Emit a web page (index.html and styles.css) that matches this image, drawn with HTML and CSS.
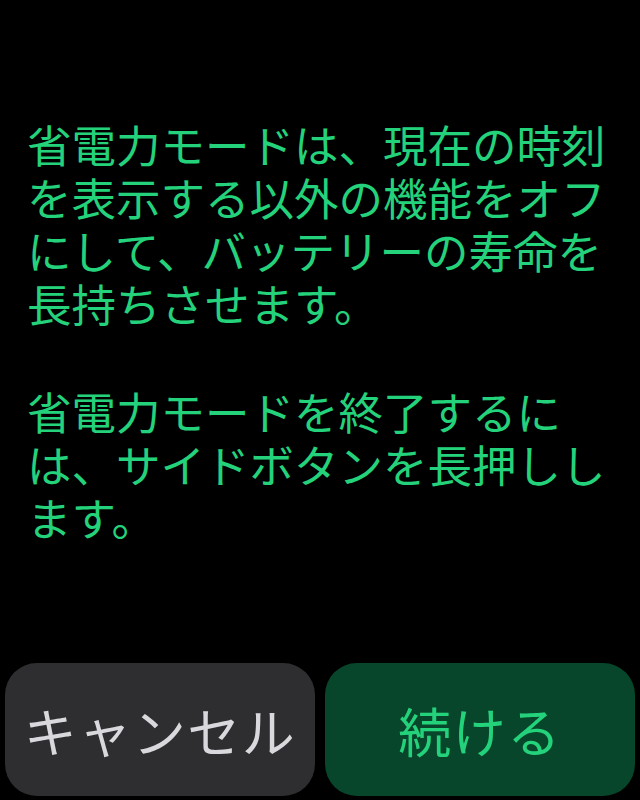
FILE: index.html
```html
<!DOCTYPE html>
<html lang="ja">
<head>
<meta charset="utf-8">
<title>省電力モード</title>
<link rel="stylesheet" href="styles.css">
</head>
<body>
<main class="screen">
  <section class="message">
    <p>省電力モードは、現在の時刻を表示する以外の機能をオフにして、バッテリーの寿命を長持ちさせます。</p>
    <p>省電力モードを終了するには、サイドボタンを長押しします。</p>
  </section>
  <div class="actions">
    <button class="btn btn-cancel">キャンセル</button>
    <button class="btn btn-continue">続ける</button>
  </div>
</main>
</body>
</html>
```
FILE: styles.css
```css
html, body {
  margin: 0;
  padding: 0;
  background: #000;
}
.screen {
  width: 640px;
  height: 800px;
  display: flex;
  flex-direction: column;
  box-sizing: border-box;
  font-family: "Noto Sans CJK JP", "Noto Sans", sans-serif;
}
.message {
  padding: 117px 27px 0 27px;
  color: #24d27b;
  font-size: 44.5px;
  line-height: 53px;
}
.message p {
  margin: 0 0 55px 0;
}
.actions {
  margin-top: auto;
  display: flex;
  gap: 10px;
  padding: 0 5px 4px 5px;
}
.btn {
  flex: 1;
  height: 133px;
  border: none;
  border-radius: 32px;
  font-family: "Noto Sans CJK JP", "Noto Sans", sans-serif;
  font-size: 53px;
  letter-spacing: 1.5px;
  display: flex;
  align-items: center;
  justify-content: center;
  padding: 0;
}
.btn-cancel {
  background: #2e2e30;
  color: #d9d9dd;
}
.btn-continue {
  background: #07462a;
  color: #24d27b;
}
```
